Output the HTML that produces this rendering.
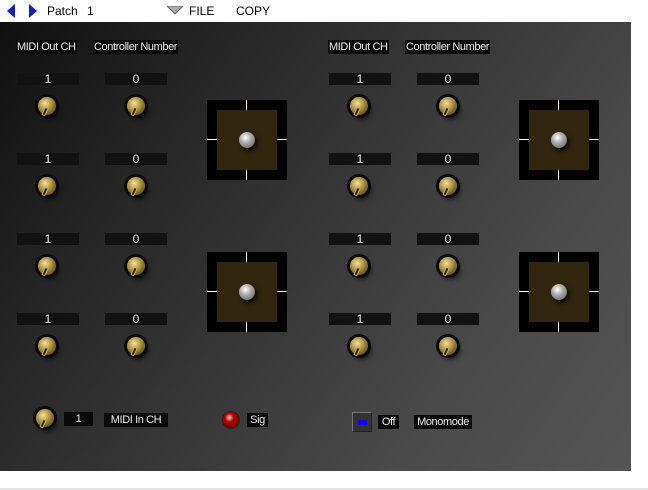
<!DOCTYPE html><html><head><style>
body{margin:0;width:648px;height:490px;background:#fff;position:relative;overflow:hidden;font-family:"Liberation Sans",sans-serif;}
.top{position:absolute;top:0;left:0;width:648px;height:22px;font-size:12px;color:#000}
.panel{position:absolute;left:0;top:22px;width:631px;height:449px;background:linear-gradient(125deg,#101010 0%,#262626 25%,#383838 50%,#4a4a4a 75%,#555 100%)}
.a{position:absolute}
.lbl{position:absolute;background:#0a0a0a;color:#eee;font-size:11px;line-height:14px;height:14px;white-space:nowrap;letter-spacing:-0.4px}
.val{position:absolute;background:#121212;color:#eee;font-size:12px;line-height:12px;height:12px;width:62px;text-align:center}
.knob{position:absolute;width:18px;height:18px;border-radius:50%;background:radial-gradient(circle at 40% 35%,#efe3a0 0%,#b89e45 35%,#6a5518 75%,#2a2208 100%);box-shadow:0 0 0 3px #0a0a0a,3px 4px 5px rgba(0,0,0,.7)}
.knob:after{content:"";position:absolute;left:5px;top:10px;width:2px;height:7px;background:#222;transform:rotate(25deg);border:1px solid #cdb870;border-radius:1px}
.pad{position:absolute;width:80px;height:80px;background:#000}
.pad .in{position:absolute;left:10px;top:10px;width:60px;height:60px;background:#33260f}
.pad .t{position:absolute;background:#fff}
.ball{position:absolute;left:32px;top:32px;width:16px;height:16px;border-radius:50%;background:radial-gradient(circle at 40% 35%,#fff 0%,#aaa 40%,#555 100%);box-shadow:3px 3px 4px rgba(0,0,0,.7)}
</style></head><body>
<div class="top">
<svg class="a" style="left:7px;top:4px" width="30" height="15"><polygon points="8,0 8,14 0,7" fill="#0b1fc8"/><polygon points="22,0 22,14 30,7" fill="#0b1fc8"/></svg>
<span class="a" style="left:47px;top:4px">Patch</span><span class="a" style="left:87px;top:4px">1</span>
<svg class="a" style="left:167px;top:6px" width="16" height="9"><polygon points="0,0 16,0 8,8" fill="#aaa" stroke="#666"/></svg>
<span class="a" style="left:189px;top:4px">FILE</span><span class="a" style="left:236px;top:4px">COPY</span>
</div>
<div class="panel"></div>
<div id="c"></div>
<div class="a" style="left:0;top:488px;width:648px;height:2px;background:#e4e4e4"></div>
<script>
var h='';
function L(x,y,t,w){h+='<div class="lbl" style="left:'+x+'px;top:'+y+'px;'+(w?'width:'+w+'px;text-align:center;':'padding:0 1px;')+'">'+t+'</div>';}
[[16,93],[328,405]].forEach(function(g){
L(g[0],40,'MIDI Out CH');L(g[1],40,'Controller Number');
[73,153,233,313].forEach(function(y){
h+='<div class="val" style="left:'+(g[0]+1)+'px;top:'+y+'px">1</div>';
h+='<div class="val" style="left:'+(g[1]+12)+'px;top:'+y+'px">0</div>';
h+='<div class="knob" style="left:'+(g[0]+22)+'px;top:'+(y+24)+'px"></div>';
h+='<div class="knob" style="left:'+(g[1]+34)+'px;top:'+(y+24)+'px"></div>';
});});
[[207,100],[207,252],[519,100],[519,252]].forEach(function(p){
h+='<div class="pad" style="left:'+p[0]+'px;top:'+p[1]+'px"><div class="in"></div><div class="t" style="left:39px;top:0;width:1px;height:10px"></div><div class="t" style="left:39px;top:70px;width:1px;height:10px"></div><div class="t" style="left:0;top:39px;width:10px;height:1px"></div><div class="t" style="left:70px;top:39px;width:10px;height:1px"></div><div class="ball"></div></div>';
});
h+='<div class="knob" style="left:36px;top:409px"></div>';
h+='<div class="lbl" style="left:64px;top:412px;width:29px;text-align:center">1</div>';
L(104,413,'MIDI In CH',64);
h+='<div class="a" style="left:223px;top:412px;width:16px;height:16px;border-radius:50%;background:radial-gradient(circle at 40% 35%,#fcc 0%,#b00 30%,#400 100%);box-shadow:0 0 0 1px #222"></div>';
L(247,413,'Sig',21);
h+='<div class="a" style="left:352px;top:412px;width:18px;height:18px;background:#333;border:1px solid #777;border-right-color:#222;border-bottom-color:#222"><div class="a" style="left:5px;top:7px;width:9px;height:5px;background:#10f"></div></div>';
L(378,415,'Off',21);L(414,415,'Monomode',58);
document.getElementById('c').innerHTML=h;
</script>
</body></html>
